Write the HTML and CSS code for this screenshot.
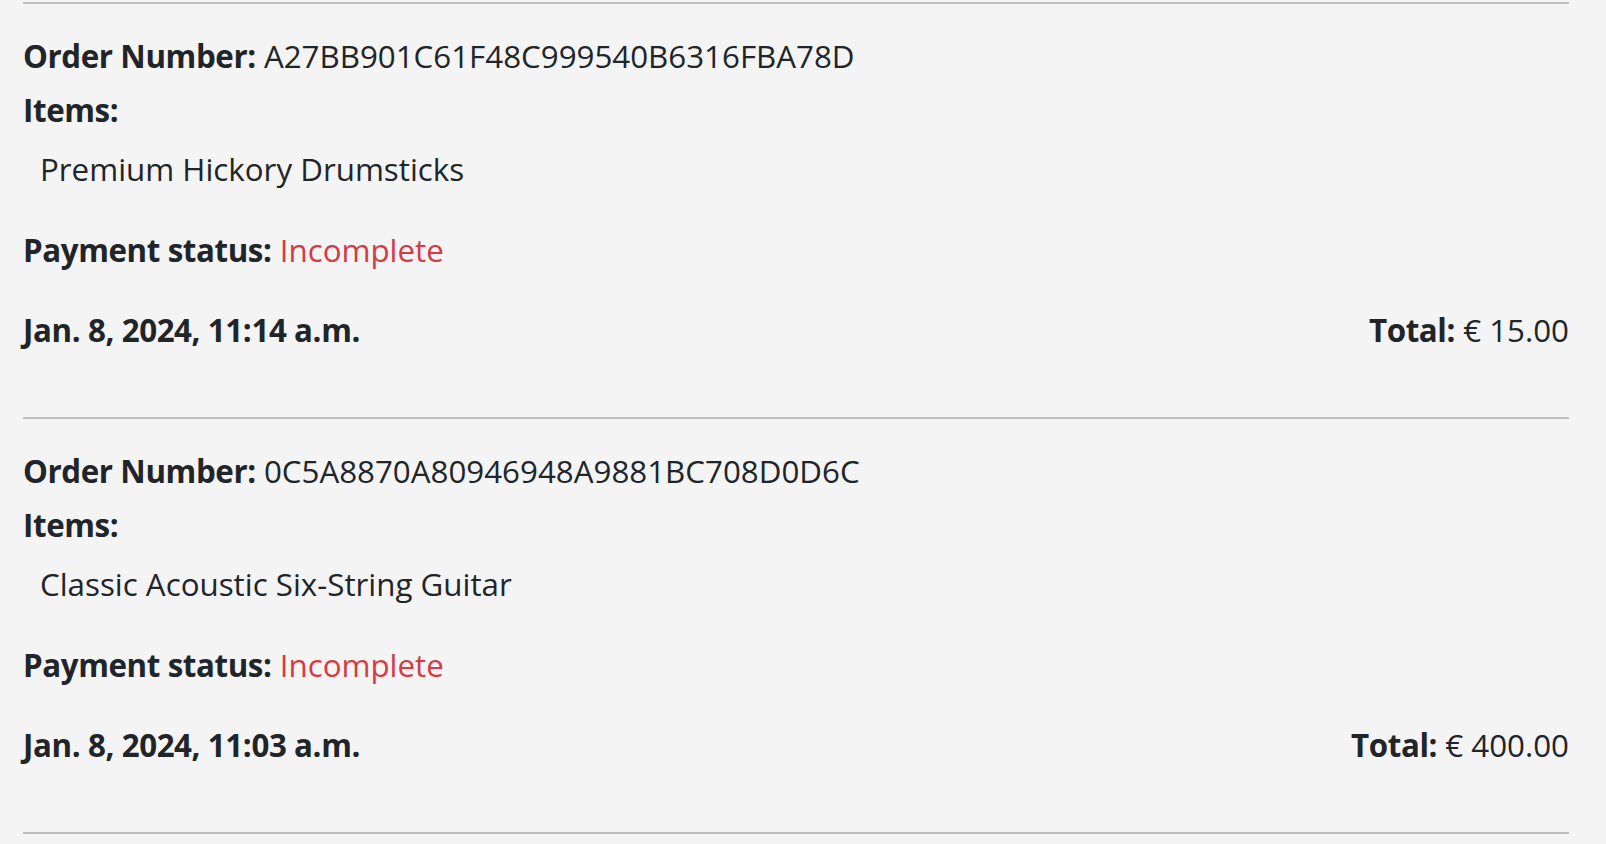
FILE: index.html
```html
<!DOCTYPE html>
<html lang="en">
<head>
<meta charset="utf-8">
<title>Orders</title>
<link rel="stylesheet" href="styles.css">
</head>
<body>
<main class="orders">
  <hr class="sep">
  <article class="order">
    <div class="line"><strong>Order Number:</strong> A27BB901C61F48C999540B6316FBA78D</div>
    <div class="line label"><strong>Items:</strong></div>
    <ul class="items">
      <li class="line">Premium Hickory Drumsticks</li>
    </ul>
    <div class="line status"><strong>Payment status:</strong> <span class="danger">Incomplete</span></div>
    <div class="line meta">
      <strong>Jan. 8, 2024, 11:14 a.m.</strong>
      <span><strong>Total:</strong> € 15.00</span>
    </div>
  </article>
  <hr class="sep">
  <article class="order">
    <div class="line"><strong>Order Number:</strong> 0C5A8870A80946948A9881BC708D0D6C</div>
    <div class="line label"><strong>Items:</strong></div>
    <ul class="items">
      <li class="line">Classic Acoustic Six-String Guitar</li>
    </ul>
    <div class="line status"><strong>Payment status:</strong> <span class="danger">Incomplete</span></div>
    <div class="line meta">
      <strong>Jan. 8, 2024, 11:03 a.m.</strong>
      <span><strong>Total:</strong> € 400.00</span>
    </div>
  </article>
  <hr class="sep">
</main>
</body>
</html>
```
FILE: styles.css
```css
html, body {
  margin: 0;
  padding: 0;
  background: #f4f4f4;
}
body {
  font-family: "Open Sans", "Noto Sans", sans-serif;
  font-size: 31.3px;
  color: #212529;
}
.orders {
  padding: 2px 37px 0 23px;
}
.sep {
  margin: 0;
  border: 0;
  border-top: 2px solid #bfbfbf;
}
.order {
  display: flex;
  flex-direction: column;
  padding-top: 28px;
  padding-bottom: 63px;
}
.line {
  line-height: 48px;
}
strong {
  font-weight: 700;
  letter-spacing: -0.4px;
}
.label {
  margin-top: 6px;
}
.items {
  list-style: none;
  margin: 11px 0 0 0;
  padding: 0 0 0 17px;
}
.status {
  margin-top: 33px;
}
.meta {
  margin-top: 32px;
  display: flex;
  justify-content: space-between;
}
.danger {
  color: #d63a44;
}
```
